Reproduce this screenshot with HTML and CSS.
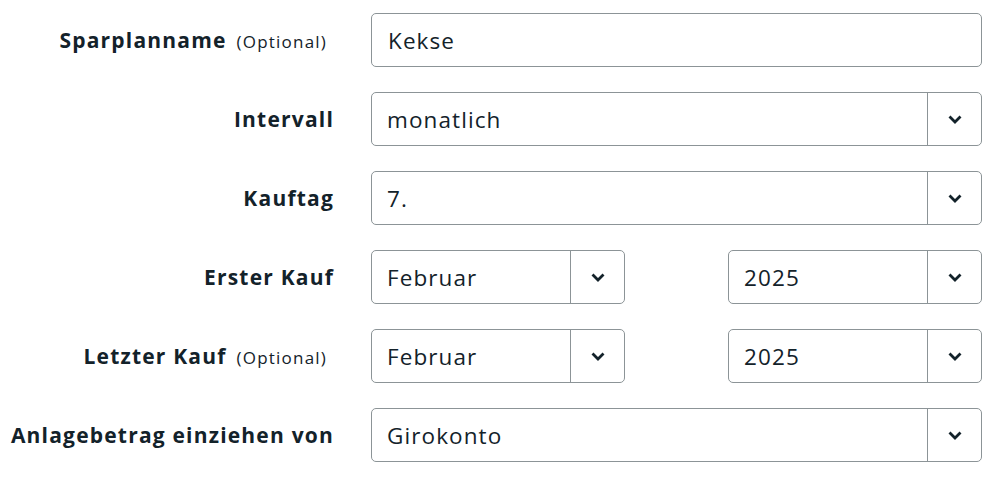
FILE: index.html
```html
<!DOCTYPE html>
<html lang="de">
<head>
  <meta charset="UTF-8" />
  <meta name="viewport" content="width=device-width, initial-scale=1" />
  <title>Sparplan bearbeiten</title>
  <link rel="stylesheet" href="styles.css">
</head>
<body>

<form class="plan-form">
  <label class="field-label" for="plan-name">Sparplanname<span class="optional">(Optional)</span></label>
  <div class="text-input" id="plan-name">Kekse</div>

  <div class="field-label">Intervall</div>
  <div class="select-box">
    <span class="select-value">monatlich</span>
    <span class="select-toggle"><svg width="14" height="9" viewBox="0 0 14 9"><path d="M1.5 1.5l5.5 5.5 5.5-5.5" /></svg></span>
  </div>

  <div class="field-label">Kauftag</div>
  <div class="select-box">
    <span class="select-value">7.</span>
    <span class="select-toggle"><svg width="14" height="9" viewBox="0 0 14 9"><path d="M1.5 1.5l5.5 5.5 5.5-5.5" /></svg></span>
  </div>

  <div class="field-label">Erster Kauf</div>
  <div class="date-pair">
    <div class="select-box">
      <span class="select-value">Februar</span>
      <span class="select-toggle"><svg width="14" height="9" viewBox="0 0 14 9"><path d="M1.5 1.5l5.5 5.5 5.5-5.5" /></svg></span>
    </div>
    <div class="select-box">
      <span class="select-value">2025</span>
      <span class="select-toggle"><svg width="14" height="9" viewBox="0 0 14 9"><path d="M1.5 1.5l5.5 5.5 5.5-5.5" /></svg></span>
    </div>
  </div>

  <div class="field-label">Letzter Kauf<span class="optional">(Optional)</span></div>
  <div class="date-pair">
    <div class="select-box">
      <span class="select-value">Februar</span>
      <span class="select-toggle"><svg width="14" height="9" viewBox="0 0 14 9"><path d="M1.5 1.5l5.5 5.5 5.5-5.5" /></svg></span>
    </div>
    <div class="select-box">
      <span class="select-value">2025</span>
      <span class="select-toggle"><svg width="14" height="9" viewBox="0 0 14 9"><path d="M1.5 1.5l5.5 5.5 5.5-5.5" /></svg></span>
    </div>
  </div>

  <div class="field-label">Anlagebetrag einziehen von</div>
  <div class="select-box">
    <span class="select-value">Girokonto</span>
    <span class="select-toggle"><svg width="14" height="9" viewBox="0 0 14 9"><path d="M1.5 1.5l5.5 5.5 5.5-5.5" /></svg></span>
  </div>
</form>

</body>
</html>
```

FILE: styles.css
```css
body {
  margin: 0;
  background: #fff;
  color: #13222a;
  font-family: 'Open Sans', sans-serif;
}
.plan-form {
  display: grid;
  grid-template-columns: 333px 611px;
  column-gap: 38px;
  row-gap: 25px;
  padding-top: 13px;
  align-items: center;
}
.field-label {
  text-align: right;
  font-size: 21px;
  font-weight: 700;
  letter-spacing: 1.2px;
  white-space: nowrap;
  margin-right: -1px;
}
.optional {
  font-size: 17px;
  font-weight: 400;
  letter-spacing: 1.2px;
  margin: 0 7px 0 10px;
}
.text-input,
.select-box {
  box-sizing: border-box;
  height: 54px;
  border: 1px solid #8c9497;
  border-radius: 5px;
  font-size: 22.5px;
  letter-spacing: 1.1px;
}
.text-input {
  display: flex;
  align-items: center;
  padding: 0 16px;
}
.select-box {
  display: flex;
}
.select-value {
  flex: 1;
  display: flex;
  align-items: center;
  padding-left: 15px;
}
.select-toggle {
  width: 53px;
  border-left: 1px solid #8c9497;
  display: flex;
  align-items: center;
  justify-content: center;
}
.select-toggle path {
  fill: none;
  stroke: #13222a;
  stroke-width: 2.8;
}
.date-pair {
  display: grid;
  grid-template-columns: 254px 254px;
  column-gap: 103px;
}
```
